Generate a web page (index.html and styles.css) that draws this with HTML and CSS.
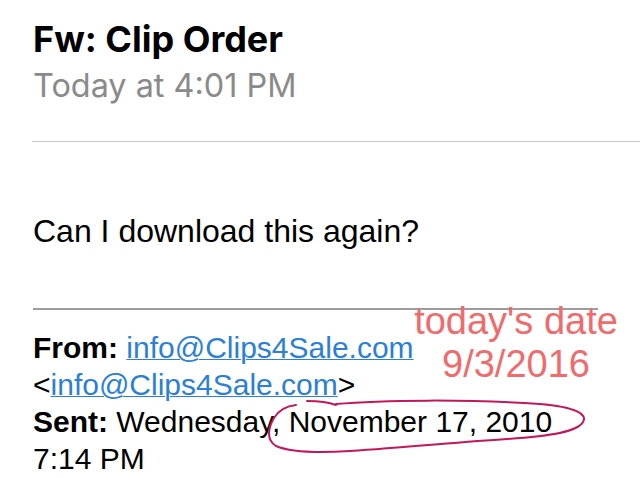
FILE: index.html
```html
<!DOCTYPE html>
<html>
<head>
<meta charset="utf-8">
<link rel="stylesheet" href="styles.css">
</head>
<body>
<div class="mail">
  <header class="head">
    <h1 class="subject">Fw: Clip Order</h1>
    <div class="date">Today at 4:01 PM</div>
  </header>
  <div class="sep"></div>
  <div class="content">
    <p class="msg">Can I download this again?</p>
    <div class="quote-rule"></div>
    <div class="quoted">
      <div class="line"><b>From:</b> <a href="#">info@Clips4Sale.com</a></div>
      <div class="line">&lt;<a href="#">info@Clips4Sale.com</a>&gt;</div>
      <div class="line"><b>Sent:</b> Wednesday, November 17, 2010</div>
      <div class="line">7:14 PM</div>
    </div>
  </div>
  <div class="note">today's date<br>9/3/2016</div>
  <svg class="circle" width="640" height="478" viewBox="0 0 640 478">
    <path d="M307 401 C318 401 328 402 336 405 M336 404 C380 400 470 399 540 404 C575 407 588 414 583 422 C578 431 555 436 507 439 C460 442 410 447 350 451 C320 453 290 452 276 446 C266 440 268 428 274 418 C279 410 286 406 296 405" fill="none" stroke="#c2185b" stroke-width="2" stroke-linecap="round"/>
  </svg>
</div>
</body>
</html>
```

FILE: styles.css
```css
html, body {
  margin: 0;
  padding: 0;
  background: #fff;
}
.mail {
  position: relative;
  width: 640px;
  height: 478px;
  overflow: hidden;
}
.head {
  padding: 19px 0 0 33px;
}
.subject {
  margin: 0;
  font-family: Inter, "Liberation Sans", sans-serif;
  font-weight: 700;
  font-size: 36px;
  line-height: 40px;
  color: #000;
}
.date {
  font-family: Inter, "Liberation Sans", sans-serif;
  font-size: 32.4px;
  line-height: 54px;
  color: #8a8a8a;
}
.sep {
  margin: 28px 0 0 32px;
  height: 1px;
  background: #c8c8c8;
}
.content {
  padding-left: 33px;
  font-family: "Liberation Sans", Arial, sans-serif;
  color: #000;
}
.msg {
  margin: 69px 0 0 0;
  font-size: 32px;
  line-height: 40px;
}
.quote-rule {
  margin-top: 57px;
  width: 565px;
  height: 2px;
  background: #9c9c9c;
}
.quoted {
  margin-top: 19px;
  font-size: 30px;
  line-height: 37px;
}
.quoted a {
  color: #2a7fd6;
  text-decoration: underline;
  text-decoration-thickness: 1px;
}
.note {
  position: absolute;
  left: 405px;
  top: 300px;
  width: 222px;
  text-align: center;
  font-family: "Liberation Sans", Arial, sans-serif;
  font-size: 38px;
  line-height: 43px;
  color: #f06b6b;
}
.circle {
  position: absolute;
  left: 0;
  top: 0;
  pointer-events: none;
}
```
